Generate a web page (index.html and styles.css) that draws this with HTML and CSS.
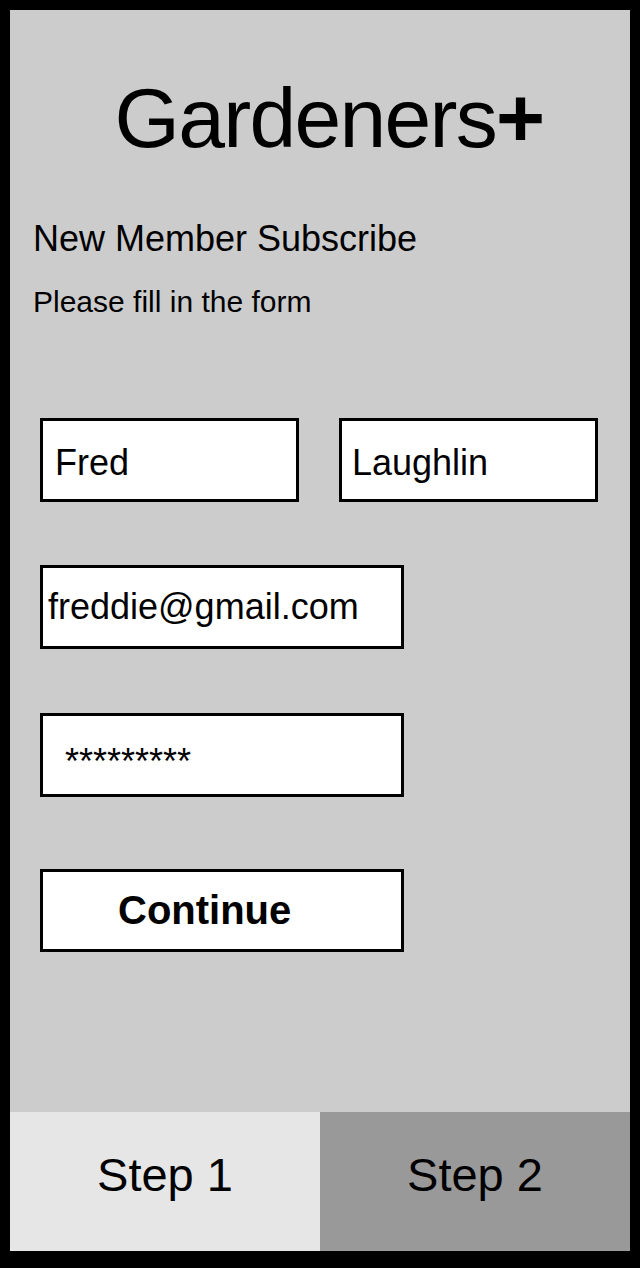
FILE: index.html
```html
<!DOCTYPE html>
<html>
<head>
<meta charset="utf-8">
<link rel="stylesheet" href="styles.css">
</head>
<body>
<div class="frame">
  <main class="content">
    <h1 class="brand">Gardeners<span class="plus">+</span></h1>
    <h2 class="heading">New Member Subscribe</h2>
    <p class="sub">Please fill in the form</p>
    <div class="form">
      <div class="row">
        <div class="field name first">Fred</div>
        <div class="field name last">Laughlin</div>
      </div>
      <div class="field wide email">freddie@gmail.com</div>
      <div class="field wide pass">*********</div>
      <div class="field wide button">Continue</div>
    </div>
  </main>
  <nav class="steps">
    <div class="step active">Step 1</div>
    <div class="step">Step 2</div>
  </nav>
</div>
</body>
</html>
```

FILE: styles.css
```css
html, body {
  margin: 0;
  padding: 0;
  background: #000;
}
.frame {
  box-sizing: border-box;
  width: 640px;
  height: 1268px;
  border: 10px solid #000;
  border-bottom-width: 17px;
  background: #cccccc;
  display: flex;
  flex-direction: column;
  font-family: "Liberation Sans", Arial, sans-serif;
  color: #000;
}
.content {
  flex: 1;
  padding: 0 0 0 23px;
}
.brand {
  margin: 60px 0 0 -5px;
  font-weight: normal;
  font-size: 84px;
  line-height: 96px;
  text-align: center;
  letter-spacing: -1.7px;
}
.plus {
  font-weight: bold;
}
.heading {
  margin: 53px 0 0 0;
  font-weight: normal;
  font-size: 36px;
  line-height: 40px;
}
.sub {
  margin: 26px 0 0 0;
  font-size: 30px;
  line-height: 34px;
}
.form {
  display: flex;
  flex-direction: column;
  align-items: flex-start;
  gap: 63px;
  margin: 99px 0 0 7px;
}
.row {
  display: flex;
  gap: 40px;
}
.field {
  box-sizing: border-box;
  height: 84px;
  border: 3px solid #000;
  background: #fff;
  display: flex;
  align-items: center;
  font-size: 36px;
  padding-top: 6px;
}
.name {
  width: 259px;
}
.first { padding-left: 12px; }
.last { padding-left: 10px; }
.wide {
  width: 364px;
}
.email {
  padding-left: 5px;
  padding-top: 0;
}
.pass {
  margin-top: 1px;
  padding-left: 22px;
  padding-top: 14px;
}
.button {
  margin-top: 9px;
  height: 83px;
  padding-left: 75px;
  padding-top: 0;
  font-weight: bold;
  font-size: 40px;
}
.steps {
  display: flex;
  height: 139px;
}
.step {
  flex: 1;
  display: flex;
  align-items: center;
  justify-content: center;
  background: #999999;
  font-size: 47px;
  padding-bottom: 14px;
}
.step.active {
  background: #e6e6e6;
}
```
